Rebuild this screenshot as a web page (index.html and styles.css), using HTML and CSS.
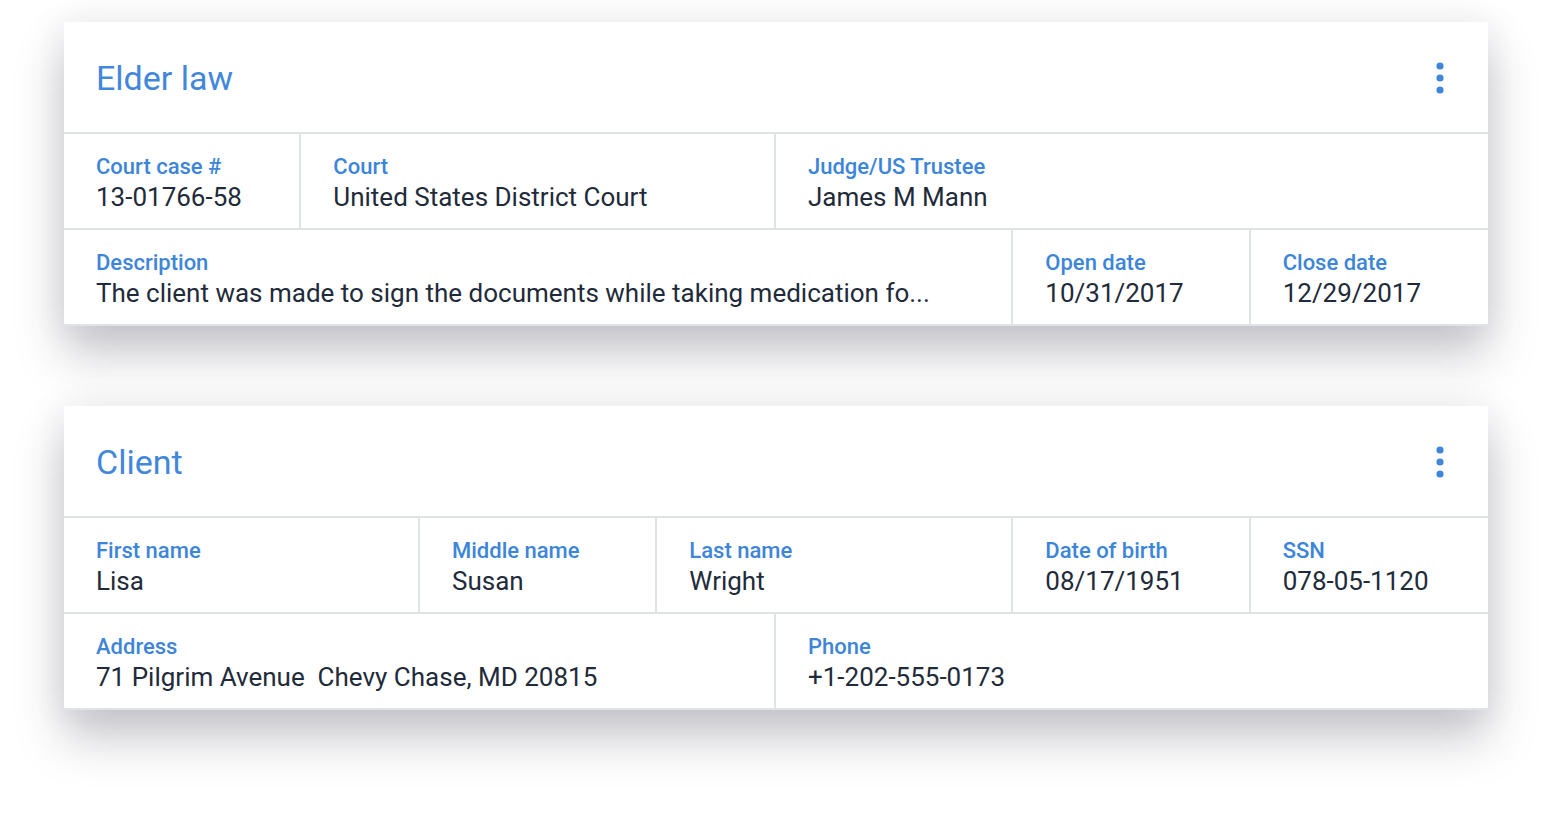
FILE: index.html
```html
<!DOCTYPE html>
<html lang="en">
<head>
<meta charset="utf-8">
<title>Case details</title>
<link rel="stylesheet" href="styles.css">
</head>
<body>
<main class="page">
  <section class="card">
    <header class="card-head">
      <h2 class="card-title">Elder law</h2>
      <button class="kebab" aria-label="More">
        <svg width="10" height="34" viewBox="0 0 10 34"><circle cx="5" cy="5" r="3.6"/><circle cx="5" cy="17" r="3.6"/><circle cx="5" cy="29" r="3.6"/></svg>
      </button>
    </header>
    <div class="row">
      <div class="cell span-2"><div class="label">Court case #</div><div class="value">13-01766-58</div></div>
      <div class="cell span-4"><div class="label">Court</div><div class="value">United States District Court</div></div>
      <div class="cell span-6"><div class="label">Judge/US Trustee</div><div class="value">James M Mann</div></div>
    </div>
    <div class="row">
      <div class="cell span-8"><div class="label">Description</div><div class="value">The client was made to sign the documents while taking medication fo...</div></div>
      <div class="cell span-2"><div class="label">Open date</div><div class="value">10/31/2017</div></div>
      <div class="cell span-2"><div class="label">Close date</div><div class="value">12/29/2017</div></div>
    </div>
  </section>

  <section class="card">
    <header class="card-head">
      <h2 class="card-title">Client</h2>
      <button class="kebab" aria-label="More">
        <svg width="10" height="34" viewBox="0 0 10 34"><circle cx="5" cy="5" r="3.6"/><circle cx="5" cy="17" r="3.6"/><circle cx="5" cy="29" r="3.6"/></svg>
      </button>
    </header>
    <div class="row">
      <div class="cell span-3"><div class="label">First name</div><div class="value">Lisa</div></div>
      <div class="cell span-2"><div class="label">Middle name</div><div class="value">Susan</div></div>
      <div class="cell span-3"><div class="label">Last name</div><div class="value">Wright</div></div>
      <div class="cell span-2"><div class="label">Date of birth</div><div class="value">08/17/1951</div></div>
      <div class="cell span-2"><div class="label">SSN</div><div class="value">078-05-1120</div></div>
    </div>
    <div class="row">
      <div class="cell span-6"><div class="label">Address</div><div class="value">71 Pilgrim Avenue&nbsp; Chevy Chase, MD 20815</div></div>
      <div class="cell span-6"><div class="label">Phone</div><div class="value">+1-202-555-0173</div></div>
    </div>
  </section>
</main>
</body>
</html>
```

FILE: styles.css
```css
* { box-sizing: border-box; }

html, body {
  margin: 0;
  background: #ffffff;
}

body {
  font-family: Roboto, "Liberation Sans", Arial, sans-serif;
  color: #1f2b3a;
  min-height: 815px;
}

.page {
  padding: 22px 63px 106px 64px;
  display: flex;
  flex-direction: column;
  gap: 80px;
}

.card {
  background: #ffffff;
  box-shadow: 0 28px 44px rgba(40, 40, 60, 0.25), 0 0 36px rgba(40, 40, 60, 0.08);
}

.card-head {
  height: 112px;
  border-bottom: 2px solid #dfe2e6;
  display: flex;
  align-items: center;
  justify-content: space-between;
  padding: 2px 43px 0 32px;
}

.card-title {
  margin: 0;
  font-size: 34px;
  font-weight: 400;
  color: #4187dc;
}

.kebab {
  border: 0;
  background: none;
  padding: 0;
  display: flex;
  fill: #3f85da;
}

.row {
  display: grid;
  grid-template-columns: repeat(12, 1fr);
  border-bottom: 2px solid #dfe2e6;
}

.cell {
  height: 94px;
  padding: 20px 16px 0 32px;
  border-right: 2px solid #dfe2e6;
  white-space: nowrap;
  overflow: hidden;
}

.cell:last-child {
  border-right: 0;
}

.span-2 { grid-column: span 2; }
.span-3 { grid-column: span 3; }
.span-4 { grid-column: span 4; }
.span-6 { grid-column: span 6; }
.span-8 { grid-column: span 8; }

.label {
  font-size: 22px;
  line-height: 26px;
  font-weight: 500;
  color: #3d85d8;
}

.value {
  font-size: 26px;
  line-height: 34px;
  font-weight: 400;
  color: #1f2b3a;
}
```
